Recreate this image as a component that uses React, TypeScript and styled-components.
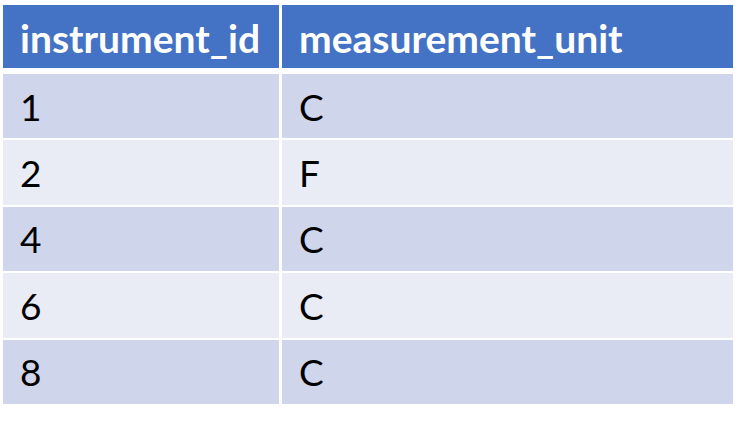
import React from "react";
import styled, { createGlobalStyle } from "styled-components";

// rows of the instrument table
const rows = [
  { id: "1", unit: "C" },
  { id: "2", unit: "F" },
  { id: "4", unit: "C" },
  { id: "6", unit: "C" },
  { id: "8", unit: "C" },
];

const GlobalStyle = createGlobalStyle`
  html, body {
    margin: 0;
    padding: 0;
    background: #ffffff;
  }
`;

const App: React.FC = () => {
  return (
    <>
      <GlobalStyle />
      <Page>
        <Table>
          <HeaderRow>
            <HeaderCell>instrument_id</HeaderCell>
            <HeaderCell>measurement_unit</HeaderCell>
          </HeaderRow>
          {rows.map((row, i) => (
            <Row key={row.id}>
              <Cell $striped={i % 2 === 1}>{row.id}</Cell>
              <Cell $striped={i % 2 === 1}>{row.unit}</Cell>
            </Row>
          ))}
        </Table>
      </Page>
    </>
  );
};

export default App;

const Page = styled.div`
  padding: 5px 0 0 3px;
  width: 739px;
  height: 422px;
  box-sizing: border-box;
`;

const Table = styled.div`
  display: flex;
  flex-direction: column;
  width: 730px;
`;

const HeaderRow = styled.div`
  display: grid;
  grid-template-columns: 276px 451px;
  column-gap: 3px;
  height: 63px;
  margin-bottom: 6px;
`;

const Row = styled.div`
  display: grid;
  grid-template-columns: 276px 451px;
  column-gap: 3px;
  height: 64.4px;
  margin-bottom: 2px;
`;

const HeaderCell = styled.div`
  display: flex;
  align-items: center;
  padding: 2px 0 0 17px;
  background-color: #4472c4;
  color: #ffffff;
  font-family: Lato, "Open Sans", sans-serif;
  font-weight: 700;
  font-size: 39px;
`;

const Cell = styled.div<{ $striped: boolean }>`
  display: flex;
  align-items: center;
  padding-left: 17px;
  background-color: ${(p) => (p.$striped ? "#e9ebf5" : "#cfd5ea")};
  color: #000000;
  font-family: Lato, "Open Sans", sans-serif;
  font-size: 37px;
`;
